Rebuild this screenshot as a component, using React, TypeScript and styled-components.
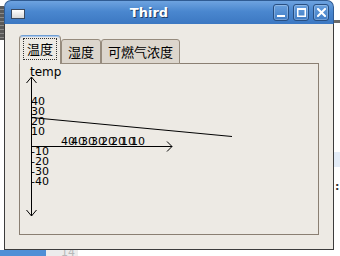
import React from "react";
import styled, { createGlobalStyle } from "styled-components";

const GlobalStyle = createGlobalStyle`
  html, body {
    margin: 0;
    padding: 0;
    background: #ffffff;
    overflow: hidden;
  }
`;

const Desktop = styled.div`
  position: relative;
  width: 340px;
  height: 256px;
  overflow: hidden;
  background: #ffffff;
  font-family: "DejaVu Sans", "Noto Sans CJK SC", sans-serif;
`;

// bits of other windows peeking out behind ours
const BackStripes = styled.div`
  position: absolute;
  left: 0;
  top: 6px;
  width: 4px;
  height: 34px;
  background: repeating-linear-gradient(
    to bottom,
    #5a5a5a 0,
    #5a5a5a 3px,
    #8a8a8a 3px,
    #8a8a8a 4px
  );
`;

const BackBar = styled.div`
  position: absolute;
  right: 0;
  top: 20px;
  width: 7px;
  height: 3px;
  background: #6a6a6a;
`;

const BackHighlight = styled.div`
  position: absolute;
  right: 0;
  top: 152px;
  width: 6px;
  height: 15px;
  background: #e3ecf7;
`;

const BackMark = styled.div`
  position: absolute;
  left: 335px;
  top: 180px;
  font-size: 11px;
  font-weight: bold;
  color: #333333;
`;

const BackBottom = styled.div`
  position: absolute;
  left: 0;
  bottom: 0;
  height: 6px;
  display: flex;
`;

const BackBlue = styled.div`
  width: 46px;
  background: #4f8fd6;
`;

const BackGutter = styled.div`
  width: 32px;
  background: #ececec;
  color: #b8b8b8;
  font-size: 11px;
  line-height: 6px;
  padding-left: 15px;
  box-sizing: border-box;
  overflow: hidden;
`;

const Window = styled.div`
  position: absolute;
  left: 4px;
  top: 0;
  width: 330px;
  height: 250px;
  display: flex;
  flex-direction: column;
`;

const TitleBar = styled.div`
  height: 24px;
  box-sizing: border-box;
  border: 1px solid #2f5b93;
  border-bottom: none;
  border-radius: 7px 7px 0 0;
  background: linear-gradient(to bottom, #6ea3e0 0%, #4a87cf 45%, #3c78c2 100%);
  display: flex;
  align-items: center;
  padding: 0 4px 0 6px;
`;

const WinIcon = styled.div`
  width: 14px;
  height: 10px;
  box-sizing: border-box;
  border: 1px solid #3a4a60;
  background: linear-gradient(to bottom, #ffffff, #d8d8d8);
  margin-top: 2px;
`;

const Title = styled.div`
  flex: 1;
  text-align: center;
  color: #ffffff;
  font-weight: bold;
  font-size: 13px;
  text-shadow: 1px 1px 0 #1f3f66;
`;

const Buttons = styled.div`
  display: flex;
  gap: 4px;
`;

const TitleButton = styled.div`
  width: 16px;
  height: 17px;
  box-sizing: border-box;
  border: 1px solid #284f82;
  border-radius: 3px;
  background: linear-gradient(to bottom, #69a0de, #3f7cc5);
  box-shadow: inset 0 0 0 1px rgba(255, 255, 255, 0.25);
  display: flex;
  align-items: center;
  justify-content: center;
`;

const Body = styled.div`
  flex: 1;
  box-sizing: border-box;
  background: #edeae4;
  border: 1px solid #3c3c3c;
  border-top: none;
  padding: 11px 14px 14px 14px;
  display: flex;
  flex-direction: column;
`;

const TabBar = styled.div`
  display: flex;
  align-items: flex-end;
  height: 29px;
  position: relative;
  z-index: 1;
`;

const Tab = styled.div<{ $active?: boolean }>`
  box-sizing: border-box;
  height: ${(p) => (p.$active ? "29px" : "25px")};
  padding: 0 ${(p) => (p.$active ? "3px" : "6px")};
  border: 1px solid #968b7d;
  border-bottom: ${(p) => (p.$active ? "none" : "1px solid #968b7d")};
  border-top: 1px solid ${(p) => (p.$active ? "#6f9fd6" : "#968b7d")};
  border-radius: ${(p) => (p.$active ? "4px 4px 0 0" : "3px 3px 0 0")};
  background: ${(p) => (p.$active ? "#edeae4" : "#dcd6cd")};
  box-shadow: ${(p) => (p.$active ? "inset 0 1px 0 #a9c6ea" : "none")};
  font-family: "Noto Sans CJK SC", "DejaVu Sans", sans-serif;
  font-size: 13px;
  color: #000000;
  display: flex;
  align-items: center;
  padding-bottom: ${(p) => (p.$active ? "2px" : "0")};
`;

const FocusLabel = styled.span`
  border: 1px dotted #333333;
  padding: 2px 3px;
  line-height: 16px;
`;

const Pane = styled.div`
  flex: 1;
  margin-top: -1px;
  border: 1px solid #8a7f72;
  background: #edeae4;
`;

const Chart = styled.svg`
  display: block;
  width: 100%;
  height: 100%;
  font-family: "DejaVu Sans", sans-serif;
`;

// offsets of the pane's inner origin on the page
const OX = 20;
const OY = 64;

const yLabels = [
  { t: "40", y: 105 },
  { t: "30", y: 115 },
  { t: "20", y: 125 },
  { t: "10", y: 135 },
  { t: "-10", y: 155 },
  { t: "-20", y: 165 },
  { t: "-30", y: 175 },
  { t: "-40", y: 185 },
];

const xLabels = ["40", "40", "30", "30", "20", "20", "10", "10"];

const App: React.FC = () => {
  const ax = 31 - OX + 0.5;
  const ay = 146 - OY + 0.5;
  return (
    <Desktop>
      <GlobalStyle />
      <BackStripes />
      <BackBar />
      <BackHighlight />
      <BackMark>:</BackMark>
      <BackBottom>
        <BackBlue />
        <BackGutter>14</BackGutter>
      </BackBottom>

      <Window>
        <TitleBar>
          <WinIcon />
          <Title>Third</Title>
          <Buttons>
            <TitleButton>
              <svg width="8" height="8" viewBox="0 0 8 8">
                <rect x="0" y="6" width="8" height="2" fill="#fff" />
              </svg>
            </TitleButton>
            <TitleButton>
              <svg width="9" height="9" viewBox="0 0 9 9">
                <rect x="0.75" y="0.75" width="7.5" height="7.5" fill="none" stroke="#fff" strokeWidth="1.5" />
                <rect x="0" y="0" width="9" height="2" fill="#fff" />
              </svg>
            </TitleButton>
            <TitleButton>
              <svg width="9" height="9" viewBox="0 0 9 9">
                <path d="M1 1 L8 8 M8 1 L1 8" stroke="#fff" strokeWidth="2" strokeLinecap="square" />
              </svg>
            </TitleButton>
          </Buttons>
        </TitleBar>

        <Body>
          <TabBar>
            <Tab $active>
              <FocusLabel>温度</FocusLabel>
            </Tab>
            <Tab>湿度</Tab>
            <Tab>可燃气浓度</Tab>
          </TabBar>
          <Pane>
            <Chart>
              <text x={30 - OX} y={76 - OY} fontSize="12" fill="#000">
                temp
              </text>
              <g stroke="#000" strokeWidth="1" fill="none">
                <line x1={ax} y1={77 - OY} x2={ax} y2={216 - OY} />
                <polyline points={`${ax - 5},${83 - OY} ${ax},${77 - OY} ${ax + 5},${83 - OY}`} />
                <polyline points={`${ax - 5},${210 - OY} ${ax},${216 - OY} ${ax + 5},${210 - OY}`} />
                <line x1={ax} y1={ay} x2={172 - OX} y2={ay} />
                <polyline points={`${167 - OX},${ay - 5} ${172 - OX},${ay} ${167 - OX},${ay + 5}`} />
                <line x1={31 - OX} y1={117.5 - OY} x2={232 - OX} y2={136.5 - OY} />
              </g>
              {yLabels.map((l) => (
                <text key={l.t} x={31 - OX} y={l.y - OY} fontSize="11" fill="#000">
                  {l.t}
                </text>
              ))}
              {xLabels.map((t, i) => (
                <text key={i} x={61 + i * 10 - OX} y={145 - OY} fontSize="11" fill="#000">
                  {t}
                </text>
              ))}
            </Chart>
          </Pane>
        </Body>
      </Window>
    </Desktop>
  );
};

export default App;
